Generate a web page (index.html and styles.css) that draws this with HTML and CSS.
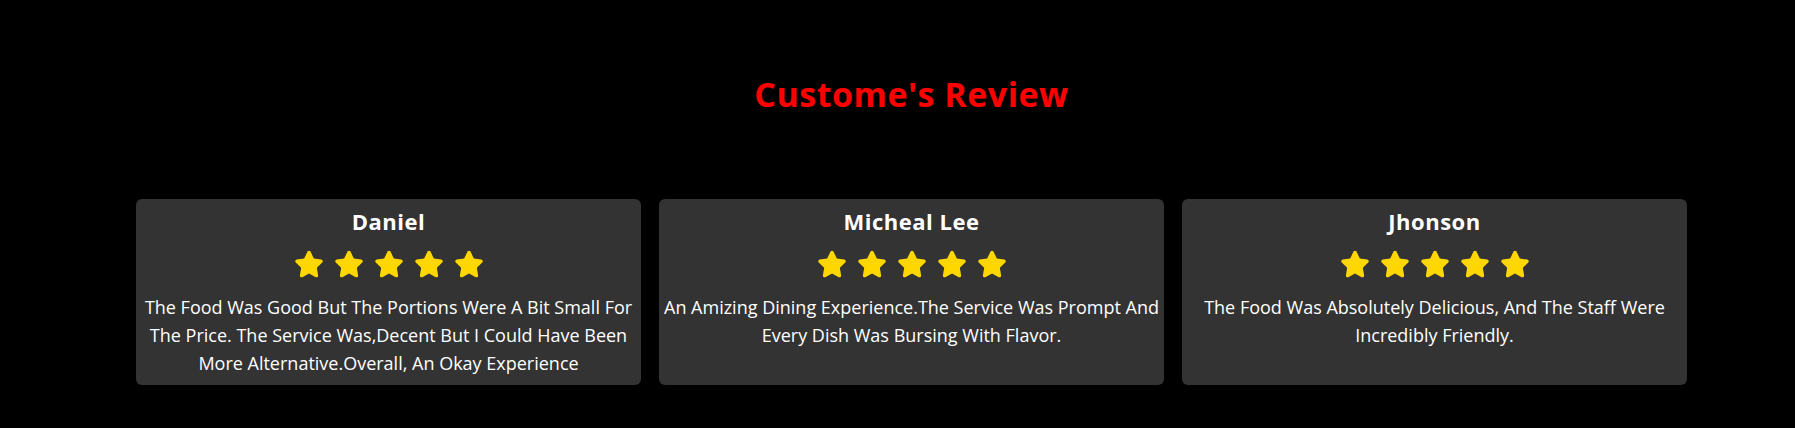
FILE: index.html
```html
<!DOCTYPE html>
<html lang="en">
<head>
<meta charset="utf-8">
<title>Customer Reviews</title>
<link rel="stylesheet" href="styles.css">
</head>
<body>
<section class="reviews">
  <h1 class="reviews-title">Custome's Review</h1>
  <div class="review-grid">
    <article class="review-card">
      <h2 class="review-name">Daniel</h2>
      <div class="stars">
        <svg class="star" viewBox="0 0 576 512"><path d="M316.9 18C311.6 7 300.4 0 288.1 0s-23.4 7-28.8 18L195 150.3 51.4 171.5c-12 1.8-22 10.2-25.7 21.7s-.7 24.2 7.9 32.7L137.8 329 113.2 474.7c-2 12 3 24.2 12.9 31.3s23 8 33.8 2.3l128.3-68.5 128.3 68.5c10.8 5.7 23.9 4.9 33.8-2.3s14.9-19.3 12.9-31.3L438.5 329 542.7 225.9c8.6-8.5 11.7-21.2 7.9-32.7s-13.7-19.9-25.7-21.7L381.2 150.3 316.9 18z"/></svg>
        <svg class="star" viewBox="0 0 576 512"><path d="M316.9 18C311.6 7 300.4 0 288.1 0s-23.4 7-28.8 18L195 150.3 51.4 171.5c-12 1.8-22 10.2-25.7 21.7s-.7 24.2 7.9 32.7L137.8 329 113.2 474.7c-2 12 3 24.2 12.9 31.3s23 8 33.8 2.3l128.3-68.5 128.3 68.5c10.8 5.7 23.9 4.9 33.8-2.3s14.9-19.3 12.9-31.3L438.5 329 542.7 225.9c8.6-8.5 11.7-21.2 7.9-32.7s-13.7-19.9-25.7-21.7L381.2 150.3 316.9 18z"/></svg>
        <svg class="star" viewBox="0 0 576 512"><path d="M316.9 18C311.6 7 300.4 0 288.1 0s-23.4 7-28.8 18L195 150.3 51.4 171.5c-12 1.8-22 10.2-25.7 21.7s-.7 24.2 7.9 32.7L137.8 329 113.2 474.7c-2 12 3 24.2 12.9 31.3s23 8 33.8 2.3l128.3-68.5 128.3 68.5c10.8 5.7 23.9 4.9 33.8-2.3s14.9-19.3 12.9-31.3L438.5 329 542.7 225.9c8.6-8.5 11.7-21.2 7.9-32.7s-13.7-19.9-25.7-21.7L381.2 150.3 316.9 18z"/></svg>
        <svg class="star" viewBox="0 0 576 512"><path d="M316.9 18C311.6 7 300.4 0 288.1 0s-23.4 7-28.8 18L195 150.3 51.4 171.5c-12 1.8-22 10.2-25.7 21.7s-.7 24.2 7.9 32.7L137.8 329 113.2 474.7c-2 12 3 24.2 12.9 31.3s23 8 33.8 2.3l128.3-68.5 128.3 68.5c10.8 5.7 23.9 4.9 33.8-2.3s14.9-19.3 12.9-31.3L438.5 329 542.7 225.9c8.6-8.5 11.7-21.2 7.9-32.7s-13.7-19.9-25.7-21.7L381.2 150.3 316.9 18z"/></svg>
        <svg class="star" viewBox="0 0 576 512"><path d="M316.9 18C311.6 7 300.4 0 288.1 0s-23.4 7-28.8 18L195 150.3 51.4 171.5c-12 1.8-22 10.2-25.7 21.7s-.7 24.2 7.9 32.7L137.8 329 113.2 474.7c-2 12 3 24.2 12.9 31.3s23 8 33.8 2.3l128.3-68.5 128.3 68.5c10.8 5.7 23.9 4.9 33.8-2.3s14.9-19.3 12.9-31.3L438.5 329 542.7 225.9c8.6-8.5 11.7-21.2 7.9-32.7s-13.7-19.9-25.7-21.7L381.2 150.3 316.9 18z"/></svg>
      </div>
      <p class="review-text">the food was good but the portions were a bit small for the price. the service was,decent but I could have been more alternative.overall, an okay experience</p>
    </article>
    <article class="review-card">
      <h2 class="review-name">Micheal Lee</h2>
      <div class="stars">
        <svg class="star" viewBox="0 0 576 512"><path d="M316.9 18C311.6 7 300.4 0 288.1 0s-23.4 7-28.8 18L195 150.3 51.4 171.5c-12 1.8-22 10.2-25.7 21.7s-.7 24.2 7.9 32.7L137.8 329 113.2 474.7c-2 12 3 24.2 12.9 31.3s23 8 33.8 2.3l128.3-68.5 128.3 68.5c10.8 5.7 23.9 4.9 33.8-2.3s14.9-19.3 12.9-31.3L438.5 329 542.7 225.9c8.6-8.5 11.7-21.2 7.9-32.7s-13.7-19.9-25.7-21.7L381.2 150.3 316.9 18z"/></svg>
        <svg class="star" viewBox="0 0 576 512"><path d="M316.9 18C311.6 7 300.4 0 288.1 0s-23.4 7-28.8 18L195 150.3 51.4 171.5c-12 1.8-22 10.2-25.7 21.7s-.7 24.2 7.9 32.7L137.8 329 113.2 474.7c-2 12 3 24.2 12.9 31.3s23 8 33.8 2.3l128.3-68.5 128.3 68.5c10.8 5.7 23.9 4.9 33.8-2.3s14.9-19.3 12.9-31.3L438.5 329 542.7 225.9c8.6-8.5 11.7-21.2 7.9-32.7s-13.7-19.9-25.7-21.7L381.2 150.3 316.9 18z"/></svg>
        <svg class="star" viewBox="0 0 576 512"><path d="M316.9 18C311.6 7 300.4 0 288.1 0s-23.4 7-28.8 18L195 150.3 51.4 171.5c-12 1.8-22 10.2-25.7 21.7s-.7 24.2 7.9 32.7L137.8 329 113.2 474.7c-2 12 3 24.2 12.9 31.3s23 8 33.8 2.3l128.3-68.5 128.3 68.5c10.8 5.7 23.9 4.9 33.8-2.3s14.9-19.3 12.9-31.3L438.5 329 542.7 225.9c8.6-8.5 11.7-21.2 7.9-32.7s-13.7-19.9-25.7-21.7L381.2 150.3 316.9 18z"/></svg>
        <svg class="star" viewBox="0 0 576 512"><path d="M316.9 18C311.6 7 300.4 0 288.1 0s-23.4 7-28.8 18L195 150.3 51.4 171.5c-12 1.8-22 10.2-25.7 21.7s-.7 24.2 7.9 32.7L137.8 329 113.2 474.7c-2 12 3 24.2 12.9 31.3s23 8 33.8 2.3l128.3-68.5 128.3 68.5c10.8 5.7 23.9 4.9 33.8-2.3s14.9-19.3 12.9-31.3L438.5 329 542.7 225.9c8.6-8.5 11.7-21.2 7.9-32.7s-13.7-19.9-25.7-21.7L381.2 150.3 316.9 18z"/></svg>
        <svg class="star" viewBox="0 0 576 512"><path d="M316.9 18C311.6 7 300.4 0 288.1 0s-23.4 7-28.8 18L195 150.3 51.4 171.5c-12 1.8-22 10.2-25.7 21.7s-.7 24.2 7.9 32.7L137.8 329 113.2 474.7c-2 12 3 24.2 12.9 31.3s23 8 33.8 2.3l128.3-68.5 128.3 68.5c10.8 5.7 23.9 4.9 33.8-2.3s14.9-19.3 12.9-31.3L438.5 329 542.7 225.9c8.6-8.5 11.7-21.2 7.9-32.7s-13.7-19.9-25.7-21.7L381.2 150.3 316.9 18z"/></svg>
      </div>
      <p class="review-text">an amizing dining experience.The service was prompt and every dish was bursing with flavor.</p>
    </article>
    <article class="review-card">
      <h2 class="review-name">Jhonson</h2>
      <div class="stars">
        <svg class="star" viewBox="0 0 576 512"><path d="M316.9 18C311.6 7 300.4 0 288.1 0s-23.4 7-28.8 18L195 150.3 51.4 171.5c-12 1.8-22 10.2-25.7 21.7s-.7 24.2 7.9 32.7L137.8 329 113.2 474.7c-2 12 3 24.2 12.9 31.3s23 8 33.8 2.3l128.3-68.5 128.3 68.5c10.8 5.7 23.9 4.9 33.8-2.3s14.9-19.3 12.9-31.3L438.5 329 542.7 225.9c8.6-8.5 11.7-21.2 7.9-32.7s-13.7-19.9-25.7-21.7L381.2 150.3 316.9 18z"/></svg>
        <svg class="star" viewBox="0 0 576 512"><path d="M316.9 18C311.6 7 300.4 0 288.1 0s-23.4 7-28.8 18L195 150.3 51.4 171.5c-12 1.8-22 10.2-25.7 21.7s-.7 24.2 7.9 32.7L137.8 329 113.2 474.7c-2 12 3 24.2 12.9 31.3s23 8 33.8 2.3l128.3-68.5 128.3 68.5c10.8 5.7 23.9 4.9 33.8-2.3s14.9-19.3 12.9-31.3L438.5 329 542.7 225.9c8.6-8.5 11.7-21.2 7.9-32.7s-13.7-19.9-25.7-21.7L381.2 150.3 316.9 18z"/></svg>
        <svg class="star" viewBox="0 0 576 512"><path d="M316.9 18C311.6 7 300.4 0 288.1 0s-23.4 7-28.8 18L195 150.3 51.4 171.5c-12 1.8-22 10.2-25.7 21.7s-.7 24.2 7.9 32.7L137.8 329 113.2 474.7c-2 12 3 24.2 12.9 31.3s23 8 33.8 2.3l128.3-68.5 128.3 68.5c10.8 5.7 23.9 4.9 33.8-2.3s14.9-19.3 12.9-31.3L438.5 329 542.7 225.9c8.6-8.5 11.7-21.2 7.9-32.7s-13.7-19.9-25.7-21.7L381.2 150.3 316.9 18z"/></svg>
        <svg class="star" viewBox="0 0 576 512"><path d="M316.9 18C311.6 7 300.4 0 288.1 0s-23.4 7-28.8 18L195 150.3 51.4 171.5c-12 1.8-22 10.2-25.7 21.7s-.7 24.2 7.9 32.7L137.8 329 113.2 474.7c-2 12 3 24.2 12.9 31.3s23 8 33.8 2.3l128.3-68.5 128.3 68.5c10.8 5.7 23.9 4.9 33.8-2.3s14.9-19.3 12.9-31.3L438.5 329 542.7 225.9c8.6-8.5 11.7-21.2 7.9-32.7s-13.7-19.9-25.7-21.7L381.2 150.3 316.9 18z"/></svg>
        <svg class="star" viewBox="0 0 576 512"><path d="M316.9 18C311.6 7 300.4 0 288.1 0s-23.4 7-28.8 18L195 150.3 51.4 171.5c-12 1.8-22 10.2-25.7 21.7s-.7 24.2 7.9 32.7L137.8 329 113.2 474.7c-2 12 3 24.2 12.9 31.3s23 8 33.8 2.3l128.3-68.5 128.3 68.5c10.8 5.7 23.9 4.9 33.8-2.3s14.9-19.3 12.9-31.3L438.5 329 542.7 225.9c8.6-8.5 11.7-21.2 7.9-32.7s-13.7-19.9-25.7-21.7L381.2 150.3 316.9 18z"/></svg>
      </div>
      <p class="review-text">the food was absolutely delicious, and the staff were incredibly friendly.</p>
    </article>
  </div>
</section>
</body>
</html>
```

FILE: styles.css
```css
* {
  box-sizing: border-box;
}

html, body {
  margin: 0;
  padding: 0;
  background: #000;
}

body {
  font-family: "Open Sans", Lato, "DejaVu Sans", sans-serif;
  color: #fff;
  width: 1795px;
  height: 428px;
  overflow: hidden;
}

.reviews {
  padding: 74px 0 0 28px;
  display: flex;
  flex-direction: column;
  align-items: center;
}

.reviews-title {
  margin: 0;
  font-size: 34px;
  line-height: 40px;
  font-weight: 700;
  letter-spacing: 0.5px;
  color: #ff0000;
}

.review-grid {
  margin-top: 85px;
  display: grid;
  grid-template-columns: repeat(3, 505px);
  column-gap: 18px;
}

.review-card {
  background: #333333;
  border-radius: 6px;
  padding: 9px 4px 8px;
  display: flex;
  flex-direction: column;
  align-items: center;
  text-align: center;
}

.review-name {
  margin: 0;
  font-size: 22px;
  line-height: 26px;
  font-weight: 700;
  letter-spacing: 0.5px;
}

.stars {
  margin-top: 16px;
  display: flex;
  gap: 10px;
}

.star {
  width: 30px;
  height: 28px;
  fill: #ffd700;
  display: block;
}

.review-text {
  margin: 15px 0 0;
  font-size: 18px;
  line-height: 28px;
  text-transform: capitalize;
}
```
